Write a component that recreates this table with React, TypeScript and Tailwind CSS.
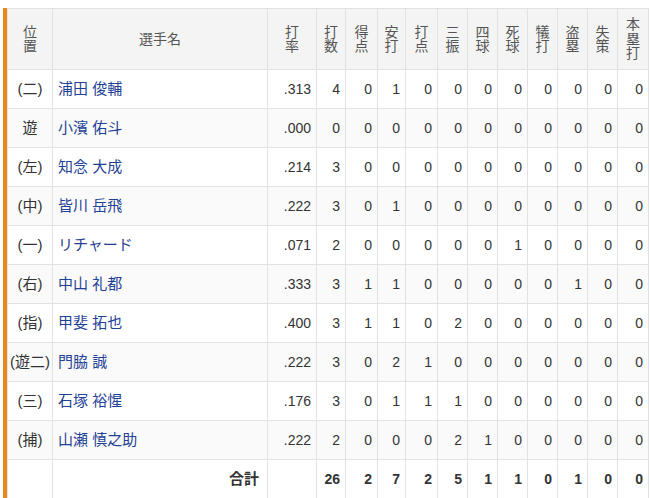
const headers = ["打率", "打数", "得点", "安打", "打点", "三振", "四球", "死球", "犠打", "盗塁", "失策", "本塁打"];

const colWidths = [45, 215, 49, 29, 32, 28, 32, 30, 30, 30, 30, 30, 30, 31];

const players = [
  { pos: "(二)", name: "浦田 俊輔", avg: ".313", stats: [4, 0, 1, 0, 0, 0, 0, 0, 0, 0, 0] },
  { pos: "遊", name: "小濱 佑斗", avg: ".000", stats: [0, 0, 0, 0, 0, 0, 0, 0, 0, 0, 0] },
  { pos: "(左)", name: "知念 大成", avg: ".214", stats: [3, 0, 0, 0, 0, 0, 0, 0, 0, 0, 0] },
  { pos: "(中)", name: "皆川 岳飛", avg: ".222", stats: [3, 0, 1, 0, 0, 0, 0, 0, 0, 0, 0] },
  { pos: "(一)", name: "リチャード", avg: ".071", stats: [2, 0, 0, 0, 0, 0, 1, 0, 0, 0, 0] },
  { pos: "(右)", name: "中山 礼都", avg: ".333", stats: [3, 1, 1, 0, 0, 0, 0, 0, 1, 0, 0] },
  { pos: "(指)", name: "甲斐 拓也", avg: ".400", stats: [3, 1, 1, 0, 2, 0, 0, 0, 0, 0, 0] },
  { pos: "(遊二)", name: "門脇 誠", avg: ".222", stats: [3, 0, 2, 1, 0, 0, 0, 0, 0, 0, 0] },
  { pos: "(三)", name: "石塚 裕惺", avg: ".176", stats: [3, 0, 1, 1, 1, 0, 0, 0, 0, 0, 0] },
  { pos: "(捕)", name: "山瀬 慎之助", avg: ".222", stats: [2, 0, 0, 0, 2, 1, 0, 0, 0, 0, 0] },
];

const totals = [26, 2, 7, 2, 5, 1, 1, 0, 1, 0, 0];

const cell = "border border-[#e2e2e2] align-middle";

function VerticalHead({ text }: { text: string }) {
  return (
    <div className="flex flex-col items-center leading-[14.5px]">
      {text.split("").map((c, i) => (
        <span key={i}>{c}</span>
      ))}
    </div>
  );
}

export default function App() {
  return (
    <div
      className="w-[650px] h-[498px] bg-white overflow-hidden pt-[8px] pl-[3px]"
      style={{ fontFamily: '"Liberation Sans", Arial, "Noto Sans CJK JP", sans-serif' }}
    >
      <div className="flex">
        <div className="w-[4px] shrink-0 bg-[#e8871e]" />
        <table className="table-fixed border-collapse w-[640px] text-[14px] text-[#333]">
          <colgroup>
            {colWidths.map((w, i) => (
              <col key={i} style={{ width: w }} />
            ))}
          </colgroup>
          <thead>
            <tr className="h-[61px] bg-[#f4f4f4] text-[#555] font-normal">
              <th className={`${cell} font-normal text-[14px]`}>
                <VerticalHead text="位置" />
              </th>
              <th className={`${cell} font-normal text-[14px]`}>選手名</th>
              {headers.map((h) => (
                <th key={h} className={`${cell} font-normal text-[14px]`}>
                  <VerticalHead text={h} />
                </th>
              ))}
            </tr>
          </thead>
          <tbody>
            {players.map((p, i) => (
              <tr key={p.name} className={`h-[39px] ${i % 2 === 1 ? "bg-[#fafafa]" : "bg-white"}`}>
                <td className={`${cell} text-center text-[15px] whitespace-nowrap px-0`}>{p.pos}</td>
                <td className={`${cell} pl-[5px] text-[15px] text-[#1f4196]`}>{p.name}</td>
                <td className={`${cell} text-right pr-[5px]`}>{p.avg}</td>
                {p.stats.map((s, j) => (
                  <td key={j} className={`${cell} text-right pr-[5px]`}>
                    {s}
                  </td>
                ))}
              </tr>
            ))}
            <tr className="h-[39px] bg-white font-bold">
              <td className={cell} />
              <td className={`${cell} text-right pr-[8px] text-[15px]`}>合計</td>
              <td className={cell} />
              {totals.map((t, j) => (
                <td key={j} className={`${cell} text-right pr-[5px]`}>
                  {t}
                </td>
              ))}
            </tr>
          </tbody>
        </table>
      </div>
    </div>
  );
}
